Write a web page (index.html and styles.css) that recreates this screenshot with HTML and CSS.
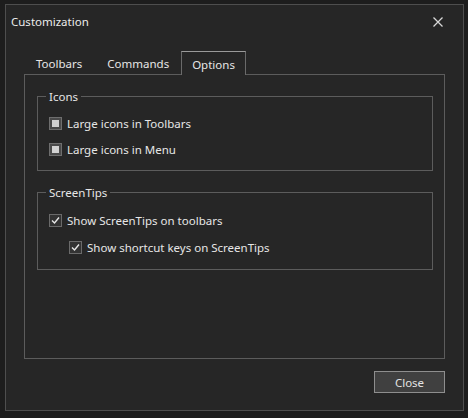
FILE: index.html
```html
<!DOCTYPE html>
<html>
<head>
<meta charset="utf-8">
<link rel="stylesheet" href="styles.css">
</head>
<body>
<div class="dialog">
  <div class="titlebar">
    <span class="title">Customization</span>
    <svg class="close-x" width="10" height="10" viewBox="0 0 10 10"><path d="M0.5 0.5 L9.5 9.5 M9.5 0.5 L0.5 9.5" stroke="#d8d8d8" stroke-width="1.3" fill="none"/></svg>
  </div>
  <div class="content">
    <div class="tabs">
      <div class="tab">Toolbars</div>
      <div class="tab">Commands</div>
      <div class="tab active">Options</div>
    </div>
    <div class="panel">
      <div class="group">
        <div class="group-title">Icons</div>
        <div class="row"><span class="cb unchecked"></span><span>Large icons in Toolbars</span></div>
        <div class="row"><span class="cb unchecked"></span><span>Large icons in Menu</span></div>
      </div>
      <div class="group group2">
        <div class="group-title">ScreenTips</div>
        <div class="row"><span class="cb checked"><svg width="11" height="11" viewBox="0 0 11 11"><path d="M2 5.5 L4.5 8 L9 2.5" stroke="#e8e8e8" stroke-width="1.4" fill="none"/></svg></span><span>Show ScreenTips on toolbars</span></div>
        <div class="row indent"><span class="cb checked"><svg width="11" height="11" viewBox="0 0 11 11"><path d="M2 5.5 L4.5 8 L9 2.5" stroke="#e8e8e8" stroke-width="1.4" fill="none"/></svg></span><span>Show shortcut keys on ScreenTips</span></div>
      </div>
    </div>
    <div class="footer">
      <button class="btn">Close</button>
    </div>
  </div>
</div>
</body>
</html>
```

FILE: styles.css
```css
html, body {
  margin: 0;
  padding: 0;
}
body {
  width: 468px;
  height: 418px;
  background: #1d1d1d;
  font-family: "Noto Sans", "Open Sans", sans-serif;
  font-size: 11.5px;
  color: #e6e6e6;
  overflow: hidden;
  padding: 4px 0 0 5px;
  box-sizing: border-box;
}
.dialog {
  width: 459px;
  height: 407px;
  box-sizing: border-box;
  border: 1px solid #4e4e4e;
  background: #262626;
  display: flex;
  flex-direction: column;
}
.titlebar {
  height: 33px;
  display: flex;
  align-items: center;
  justify-content: space-between;
  padding: 0 20px 0 5px;
}
.title {
  color: #ececec;
}
.close-x {
  display: block;
}
.content {
  padding: 0 18px;
  display: flex;
  flex-direction: column;
}
.tabs {
  display: flex;
  margin-top: 13px;
  height: 23px;
}
.tab {
  padding: 0 12px;
  line-height: 26px;
  height: 23px;
  box-sizing: border-box;
  color: #e6e6e6;
}
.tab:nth-child(2) {
  padding: 0 12px 0 13px;
}
.tab.active {
  position: relative;
  z-index: 1;
  height: 24px;
  padding: 0 10px;
  border: 1px solid #6a6a6a;
  border-top-color: #9a9a9a;
  border-bottom: none;
  background: #262626;
  line-height: 25px;
}
.panel {
  height: 285px;
  box-sizing: border-box;
  border: 1px solid #5c5c5c;
  padding: 0 11px 0 12px;
}
.group {
  margin-top: 21px;
  border: 1px solid #5c5c5c;
  padding: 0 0 8px 11px;
}
.group2 {
  margin-top: 21px;
  padding-bottom: 8px;
}
.group-title {
  width: fit-content;
  margin: -8px 0 0 -3px;
  padding: 0 3px;
  background: #262626;
  line-height: 15px;
}
.group-title + .row {
  margin-top: 6px;
}
.group2 .group-title + .row {
  margin-top: 7px;
}
.row {
  height: 26px;
  display: flex;
  align-items: center;
  gap: 5px;
}
.group2 .row {
  height: 27px;
}
.row.indent {
  margin-left: 20px;
}
.cb {
  width: 13px;
  height: 13px;
  box-sizing: border-box;
  display: flex;
  align-items: center;
  justify-content: center;
  flex: none;
}
.cb.unchecked {
  border: 1px solid #6e6e6e;
  background: #4a4a4a;
}
.cb.unchecked::after {
  content: "";
  width: 7px;
  height: 7px;
  background: #d2d2d2;
}
.cb.checked {
  border: 1px solid #6a6a6a;
  background: #333333;
}
.cb svg {
  display: block;
}
.footer {
  display: flex;
  justify-content: flex-end;
  margin-top: 12px;
}
.btn {
  width: 71px;
  height: 22px;
  box-sizing: border-box;
  border: 1px solid #8e8e8e;
  background: #404040;
  color: #e4e4e4;
  font-family: inherit;
  font-size: 11.5px;
  padding: 0;
}
```
